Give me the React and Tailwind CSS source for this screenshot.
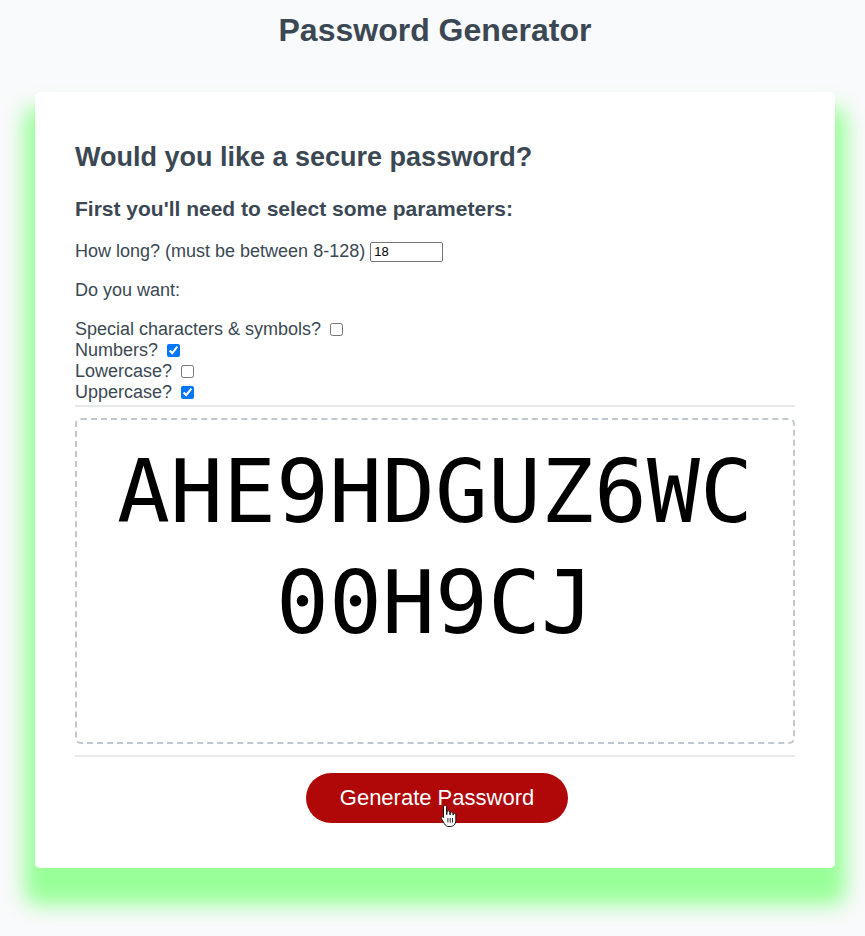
const options = [
  { label: 'Special characters & symbols?', checked: false },
  { label: 'Numbers?', checked: true },
  { label: 'Lowercase?', checked: false },
  { label: 'Uppercase?', checked: true },
];

function HandCursor() {
  return (
    <svg width="18" height="24" viewBox="0 0 18 24" className="absolute left-[134px] top-[31px]">
      <path
        d="M5 1.5c.9 0 1.5.6 1.5 1.5v7.5h.5V8.2c0-.9.6-1.4 1.4-1.4s1.4.5 1.4 1.4v2.3h.5V9.3c0-.8.6-1.3 1.3-1.3s1.3.5 1.3 1.3v1.5h.5v-.3c0-.8.6-1.2 1.2-1.2s1.2.4 1.2 1.2v6c0 3.6-2.3 6-5.5 6H9c-2.3 0-3.5-1-4.6-2.7L1.6 15c-.5-.8-.3-1.600.4-2 .7-.4 1.5-.1 2 .6l-.5-.3V3c0-.9.6-1.5 1.5-1.5z"
        fill="#fff"
        stroke="#111"
        strokeWidth="1"
      />
      <path d="M7.9 14v4.5M10.2 14v4.5M12.5 14v4.5" stroke="#111" strokeWidth="0.9" />
    </svg>
  );
}

export default function App() {
  return (
    <div
      className="min-h-screen bg-[#f9fafb] pl-[5px] text-[#3b4853]"
      style={{ fontFamily: '"Liberation Sans", Arial, sans-serif' }}
    >
      {/* Header */}
      <header className="pt-[12px] text-center">
        <h1 className="text-[32px] leading-[37px] font-bold">Password Generator</h1>
      </header>

      {/* Card */}
      <div className="mt-[43px] mx-auto w-[800px] bg-white rounded-[5px] px-10 pt-[30px] pb-[30px] text-[18px] leading-[21px] shadow-[0_26px_20px_11px_#99ff99]">
        <h2 className="mt-[20px] text-[27px] leading-[31px] font-bold">Would you like a secure password?</h2>
        <h3 className="mt-[24px] text-[21px] leading-[24px] font-bold">First you'll need to select some parameters:</h3>

        <p className="mt-[20px] flex items-center">
          How long? (must be between 8-128)
          <input
            type="text"
            defaultValue="18"
            className="ml-[5px] w-[73px] h-[20px] border border-[#767676] rounded-[2px] px-[3px] text-[13px] text-black"
          />
        </p>

        <p className="mt-[18px]">Do you want:</p>

        <div className="mt-[18px] flex flex-col">
          {options.map((o) => (
            <label key={o.label} className="flex items-center h-[21px]">
              {o.label}
              <input type="checkbox" defaultChecked={o.checked} className="ml-[9px] w-[13px] h-[13px]" />
            </label>
          ))}
        </div>

        <div className="mt-[2px] h-[2px] bg-[#e7e9eb]" />

        {/* Password box */}
        <div
          className="mt-[11px] h-[326px] border-2 border-dashed border-[#c0c7cf] rounded-[6px] px-[20px] pt-[16px] text-center text-black text-[88px] leading-[111px] break-all"
          style={{ fontFamily: '"DejaVu Sans Mono", monospace' }}
        >
          AHE9HDGUZ6WC00H9CJ
        </div>

        <div className="mt-[11px] h-[2px] bg-[#e7e9eb]" />

        {/* Footer */}
        <div className="flex justify-center pt-[16px] pb-[15px]">
          <button className="relative ml-[4px] bg-[#b00808] text-white rounded-full px-[34px] py-[14px] text-[22px] leading-[22px] cursor-pointer">
            Generate Password
            <HandCursor />
          </button>
        </div>
      </div>
    </div>
  );
}
